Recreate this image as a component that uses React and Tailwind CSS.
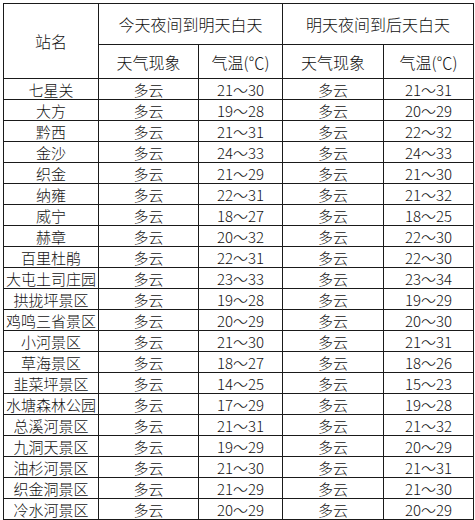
import React from 'react';

const ROWS = [
  ['七星关', '21～30', '21～31'],
  ['大方', '19～28', '20～29'],
  ['黔西', '21～31', '22～32'],
  ['金沙', '24～33', '24～33'],
  ['织金', '21～29', '21～30'],
  ['纳雍', '22～31', '21～32'],
  ['威宁', '18～27', '18～25'],
  ['赫章', '20～32', '22～30'],
  ['百里杜鹃', '22～31', '22～30'],
  ['大屯土司庄园', '23～33', '23～34'],
  ['拱拢坪景区', '19～28', '19～29'],
  ['鸡鸣三省景区', '20～29', '20～30'],
  ['小河景区', '21～30', '21～31'],
  ['草海景区', '18～27', '18～26'],
  ['韭菜坪景区', '14～25', '15～23'],
  ['水塘森林公园', '17～29', '19～28'],
  ['总溪河景区', '21～31', '21～32'],
  ['九洞天景区', '19～29', '20～29'],
  ['油杉河景区', '21～30', '21～31'],
  ['织金洞景区', '21～29', '21～30'],
  ['冷水河景区', '20～29', '20～29'],
];

const cell = 'border border-[#1a1a1a] text-center align-middle p-0 leading-none';

export default function App() {
  return (
    <div className="w-[475px] h-[520px] bg-white pt-[3px] pl-[3px] font-['Noto_Sans_CJK_SC',sans-serif] font-light text-[#111]">
      <table className="table-fixed border-collapse w-[470px]">
        <colgroup>
          <col className="w-[95px]" />
          <col className="w-[100px]" />
          <col className="w-[84px]" />
          <col className="w-[101px]" />
          <col className="w-[90px]" />
        </colgroup>
        <thead className="text-[16px]">
          <tr className="h-[41px]">
            <th rowSpan={2} className={`${cell} font-light`}>站名</th>
            <th colSpan={2} className={`${cell} font-light`}>今天夜间到明天白天</th>
            <th colSpan={2} className={`${cell} font-light`}>明天夜间到后天白天</th>
          </tr>
          <tr className="h-[34px]">
            <th className={`${cell} font-light`}>天气现象</th>
            <th className={`${cell} font-light`}>气温(℃)</th>
            <th className={`${cell} font-light`}>天气现象</th>
            <th className={`${cell} font-light`}>气温(℃)</th>
          </tr>
        </thead>
        <tbody className="text-[15px]">
          {ROWS.map(([name, t1, t2]) => (
            <tr key={name} className="h-[21px]">
              <td className={cell}>{name}</td>
              <td className={cell}>多云</td>
              <td className={cell}>{t1}</td>
              <td className={cell}>多云</td>
              <td className={cell}>{t2}</td>
            </tr>
          ))}
        </tbody>
      </table>
    </div>
  );
}
